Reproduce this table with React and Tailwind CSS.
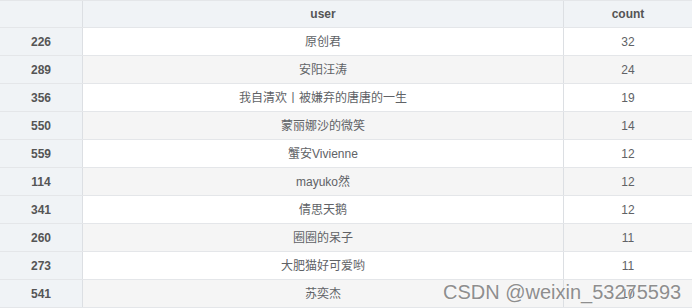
const rows = [
  ['226', '原创君', 32],
  ['289', '安阳汪涛', 24],
  ['356', '我自清欢丨被嫌弃的唐唐的一生', 19],
  ['550', '蒙丽娜沙的微笑', 14],
  ['559', '蟹安Vivienne', 12],
  ['114', 'mayuko然', 12],
  ['341', '倩思天鹅', 12],
  ['260', '圈圈的呆子', 11],
  ['273', '大肥猫好可爱哟', 11],
  ['541', '苏奕杰', 10],
]

export default function App() {
  return (
    <div className="relative w-[692px] h-[308px] overflow-hidden bg-white text-[12px] text-[#555] font-['Liberation_Sans','Noto_Sans_CJK_SC',sans-serif]">
      <div className="grid grid-cols-[83px_481px_128px] h-[28px] border-t border-b border-[#e4e6e9] bg-[#f0f3f6] font-bold text-[#555]">
        <div className="border-r border-[#dcdfe3]" />
        <div className="flex items-center justify-center border-r border-[#dcdfe3]">user</div>
        <div className="flex items-center justify-center">count</div>
      </div>
      {rows.map(([id, user, count], i) => (
        <div key={id} className={'grid grid-cols-[83px_481px_128px] h-[28px] border-b border-[#e4e6e9] ' + (i % 2 ? 'bg-[#f5f5f5]' : 'bg-white')}>
          <div className="flex items-center justify-center bg-[#f0f3f6] border-r border-[#dcdfe3] font-bold text-[#555]">{id}</div>
          <div className="flex items-center justify-center border-r border-[#dcdfe3] text-[#606266]">{user}</div>
          <div className="flex items-center justify-center text-[#606266]">{count}</div>
        </div>
      ))}
      <div className="absolute left-[443px] top-[280px] text-[20px] leading-[24px] text-[#8e8e8e] [text-shadow:0_0_2px_#fff] whitespace-nowrap">
        CSDN @weixin_53275593
      </div>
    </div>
  )
}
